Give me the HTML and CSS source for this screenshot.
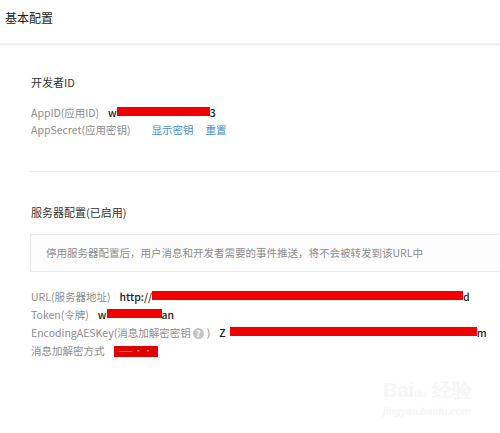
FILE: index.html
```html
<!DOCTYPE html>
<html>
<head>
    <title>基本配置</title>
    <link rel="stylesheet" href="styles.css">
</head>
<body>
    <div class="page-head">基本配置</div>

    <div class="content">
        <div class="section">
            <h3>开发者ID</h3>
            <div class="row">
                <span class="label">AppID(应用ID)</span>
                <span class="value">w<span class="mask" style="width:93px"></span>3</span>
            </div>
            <div class="row">
                <span class="label">AppSecret(应用密钥)</span>
                <a href="#" class="link first">显示密钥</a>
                <a href="#" class="link">重置</a>
            </div>
        </div>

        <div class="section server">
            <h3>服务器配置(已启用)</h3>
            <div class="notice">停用服务器配置后，用户消息和开发者需要的事件推送，将不会被转发到该URL中</div>
            <div class="rows">
                <div class="row">
                    <span class="label">URL(服务器地址)</span>
                    <span class="value">http://<span class="mask" style="width:311px"></span>d</span>
                </div>
                <div class="row">
                    <span class="label">Token(令牌)</span>
                    <span class="value">w<span class="mask" style="width:55px"></span>an</span>
                </div>
                <div class="row">
                    <span class="label">EncodingAESKey(消息加解密密钥<span class="help">?</span>)</span>
                    <span class="value">Z<span class="mask gap" style="width:247px"></span>m</span>
                </div>
                <div class="row">
                    <span class="label">消息加解密方式</span>
                    <span class="value"><span class="mode">—— · ·</span></span>
                </div>
            </div>
        </div>
    </div>

    <div class="watermark">
        <div class="wm-logo">Bai<span class="wm-du">du</span> 经验</div>
        <div class="wm-url">jingyan.baidu.com</div>
    </div>
</body>
</html>
```

FILE: styles.css
```css
body {
    margin: 0;
    background: #fff;
    font-family: "Noto Sans CJK SC", "Open Sans", sans-serif;
    font-size: 10.5px;
    color: #333;
    overflow: hidden;
}
.page-head {
    height: 43px;
    line-height: 36px;
    padding-left: 5px;
    font-size: 12px;
    color: #222;
    border-bottom: 3px solid #f3f3f3;
}
.content {
    padding-left: 30px;
}
.section {
    padding-top: 28px;
    padding-bottom: 33px;
    border-bottom: 1px solid #ececec;
}
.section.server {
    border-bottom: none;
    padding-top: 32px;
}
h3 {
    margin: 0 0 13px 1px;
    font-size: 11px;
    font-weight: normal;
    line-height: 17px;
    color: #333;
}
.row {
    display: flex;
    align-items: center;
    line-height: 17px;
    padding-left: 1px;
    white-space: nowrap;
}
.label {
    color: #8c8c8c;
    display: flex;
    align-items: center;
}
.value {
    margin-left: 9px;
    color: #222;
    font-weight: 500;
    display: flex;
    align-items: center;
}
.mask {
    display: inline-block;
    height: 9px;
    background: #f20000;
    margin-top: -3px;
}
.mask.gap {
    margin-left: 4px;
}
.link {
    color: #3f8fcf;
    text-decoration: none;
    margin-left: 12px;
}
.link.first {
    margin-left: 21px;
}
.notice {
    padding: 10px 15px;
    line-height: 16px;
    background: #fcfcfc;
    border: 1px solid #ebebeb;
    border-right: none;
    color: #8c8c8c;
}
.rows {
    padding-top: 16px;
}
.rows .row {
    line-height: 18px;
}
.help {
    display: inline-block;
    width: 11px;
    height: 11px;
    line-height: 11px;
    border-radius: 50%;
    background: #c4c4c4;
    color: #fff;
    font-size: 9px;
    font-weight: bold;
    text-align: center;
    margin: 0 3px 0 2px;
}
.mode {
    display: inline-block;
    width: 44px;
    height: 11px;
    line-height: 10px;
    background: #e00000;
    color: #f3b0b0;
    font-size: 8px;
    font-weight: normal;
    text-align: center;
}
.watermark {
    position: absolute;
    left: 383px;
    top: 378px;
    color: #f6f6f6;
    font-family: "Liberation Sans", sans-serif;
}
.wm-logo {
    font-size: 20px;
    font-weight: bold;
    line-height: 24px;
}
.wm-du {
    font-size: 10px;
}
.wm-url {
    font-size: 10px;
    font-style: italic;
    font-weight: bold;
    line-height: 12px;
}
```
